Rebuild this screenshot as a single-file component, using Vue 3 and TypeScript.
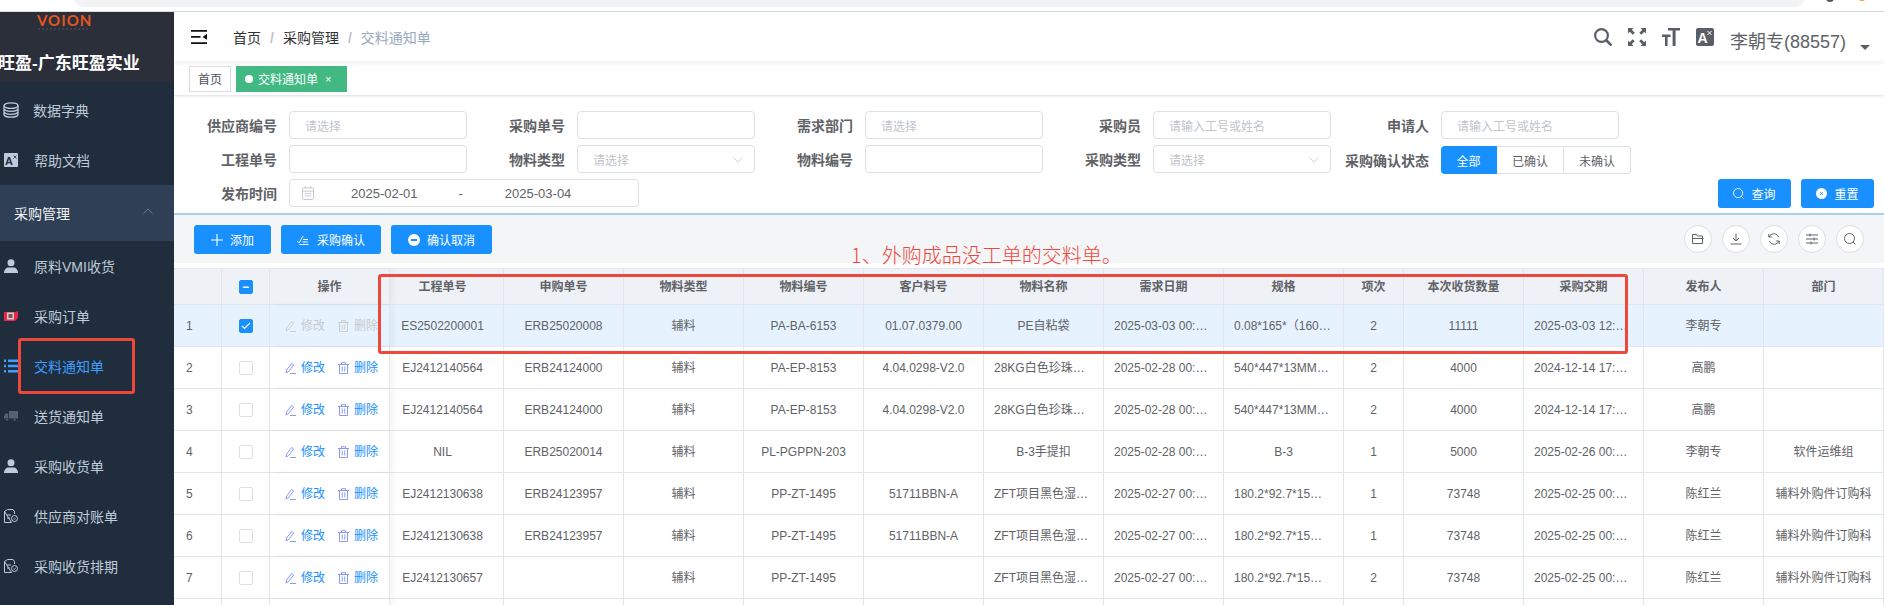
<script setup lang="ts">
interface NavItem {
  label: string
  icon: string
  active?: boolean
  group?: boolean
  indent?: boolean
}

interface Row {
  no: number
  gc: string
  sg: string
  wl: string
  kh: string
  mc: string
  rq: string
  gg: string
  xc: number
  sl: number
  jq: string
  fb: string
  bm: string
}

const navItems: NavItem[] = [
  { label: '数据字典', icon: 'db' },
  { label: '帮助文档', icon: 'lang', indent: true },
  { label: '采购管理', icon: '', group: true },
  { label: '原料VMI收货', icon: 'user', indent: true },
  { label: '采购订单', icon: 'ticket', indent: true },
  { label: '交料通知单', icon: 'list', indent: true, active: true },
  { label: '送货通知单', icon: 'truck', indent: true },
  { label: '采购收货单', icon: 'user', indent: true },
  { label: '供应商对账单', icon: 'doc', indent: true },
  { label: '采购收货排期', icon: 'doc', indent: true },
]

const headers = ['工程单号', '申购单号', '物料类型', '物料编号', '客户料号', '物料名称', '需求日期', '规格', '项次', '本次收货数量', '采购交期', '发布人', '部门']

const rows: Row[] = [
  { no: 1, gc: 'ES2502200001', sg: 'ERB25020008', wl: 'PA-BA-6153', kh: '01.07.0379.00', mc: 'PE自粘袋', rq: '2025-03-03 00:00:00', gg: '0.08*165*（160+50）', xc: 2, sl: 11111, jq: '2025-03-03 12:00:00', fb: '李朝专', bm: '' },
  { no: 2, gc: 'EJ2412140564', sg: 'ERB24124000', wl: 'PA-EP-8153', kh: '4.04.0298-V2.0', mc: '28KG白色珍珠棉袋', rq: '2025-02-28 00:00:00', gg: '540*447*13MM白色', xc: 2, sl: 4000, jq: '2024-12-14 17:00:00', fb: '高鹏', bm: '' },
  { no: 3, gc: 'EJ2412140564', sg: 'ERB24124000', wl: 'PA-EP-8153', kh: '4.04.0298-V2.0', mc: '28KG白色珍珠棉袋', rq: '2025-02-28 00:00:00', gg: '540*447*13MM白色', xc: 2, sl: 4000, jq: '2024-12-14 17:00:00', fb: '高鹏', bm: '' },
  { no: 4, gc: 'NIL', sg: 'ERB25020014', wl: 'PL-PGPPN-203', kh: '', mc: 'B-3手提扣', rq: '2025-02-28 00:00:00', gg: 'B-3', xc: 1, sl: 5000, jq: '2025-02-26 00:00:00', fb: '李朝专', bm: '软件运维组' },
  { no: 5, gc: 'EJ2412130638', sg: 'ERB24123957', wl: 'PP-ZT-1495', kh: '51711BBN-A', mc: 'ZFT项目黑色湿巾盖', rq: '2025-02-27 00:00:00', gg: '180.2*92.7*15毫米黑色', xc: 1, sl: 73748, jq: '2025-02-25 00:00:00', fb: '陈红兰', bm: '辅料外购件订购科' },
  { no: 6, gc: 'EJ2412130638', sg: 'ERB24123957', wl: 'PP-ZT-1495', kh: '51711BBN-A', mc: 'ZFT项目黑色湿巾盖', rq: '2025-02-27 00:00:00', gg: '180.2*92.7*15毫米黑色', xc: 1, sl: 73748, jq: '2025-02-25 00:00:00', fb: '陈红兰', bm: '辅料外购件订购科' },
  { no: 7, gc: 'EJ2412130657', sg: '', wl: 'PP-ZT-1495', kh: '', mc: 'ZFT项目黑色湿巾盖', rq: '2025-02-27 00:00:00', gg: '180.2*92.7*15毫米黑色', xc: 2, sl: 73748, jq: '2025-02-25 00:00:00', fb: '陈红兰', bm: '辅料外购件订购科' },
]

function cells(r: Row): (string | number)[] {
  return [r.gc, r.sg, '辅料', r.wl, r.kh, r.mc, r.rq, r.gg, r.xc, r.sl, r.jq, r.fb, r.bm]
}
</script>

<template>
  <div class="page">
    <div class="browser">
      <div class="addr"></div>
      <span class="b-dot dark"></span>
      <span class="b-dot orange"></span>
    </div>

    <div class="shell">
      <aside class="side">
        <div class="brand">
          <div class="logo">VOION</div>
          <div class="logo-sub"></div>
          <div class="brand-name">旺盈-广东旺盈实业</div>
        </div>
        <nav class="nav">
          <div
            v-for="item in navItems"
            :key="item.label"
            class="nav-item"
            :class="{ active: item.active, group: item.group, indent: item.indent }"
          >
            <svg v-if="item.icon === 'db'" class="nav-ic" viewBox="0 0 16 16" fill="none" stroke="#bfcbd9" stroke-width="1.3">
              <ellipse cx="8" cy="3.6" rx="7" ry="2.8" />
              <path d="M1 3.6v8.8c0 1.5 3.100 2.800 7 2.800s7-1.300 7-2.800V3.600M1 6.600c0 1.500 3.100 2.800 7 2.800s7-1.300 7-2.800M1 9.600c0 1.500 3.100 2.800 7 2.800s7-1.300 7-2.800" />
            </svg>
            <svg v-else-if="item.icon === 'lang'" class="nav-ic" viewBox="0 0 14 14">
              <rect width="14" height="14" rx="1" fill="#bfcbd9" />
              <text x="1" y="12" class="ic-a" fill="#1f2d3d">A</text>
              <path d="M9.500 2.500l3 3M12.500 2.500l-3 3" stroke="#1f2d3d" stroke-width=".8" />
            </svg>
            <svg v-else-if="item.icon === 'user'" class="nav-ic" viewBox="0 0 14 14" fill="#bfcbd9">
              <circle cx="7" cy="3.800" r="3.500" />
              <path d="M0 14c0-3.600 2.500-5.500 4.500-5.500h5c2 0 4.500 1.900 4.500 5.500z" />
            </svg>
            <svg v-else-if="item.icon === 'ticket'" class="nav-ic" viewBox="0 0 14 10">
              <path d="M0 1h11l3-1v7l-3 3H0z" fill="#e8264f" />
              <rect x="3" y="1.500" width="7" height="7" fill="#d9d0c8" />
              <rect x="4.500" y="3" width="4" height="4" fill="#6d5a5a" />
            </svg>
            <svg v-else-if="item.icon === 'list'" class="nav-ic" viewBox="0 0 14 14" fill="#409eff">
              <path d="M0 .5h2v2.500H0zM4 .5h10v2.500H4zM0 5.700h2v2.500H0zM4 5.700h10v2.500H4zM0 11h2v2.500H0zM4 11h10v2.500H4z" />
            </svg>
            <svg v-else-if="item.icon === 'truck'" class="nav-ic" viewBox="0 0 14 10" fill="#56636f">
              <path d="M5 0h9v7.500H5zM4.200 2.500v5H0V5.500L1.500 2.500z" />
              <circle cx="3" cy="8.500" r="1.400" stroke="#1f2d3d" stroke-width=".5" />
              <circle cx="10.500" cy="8.500" r="1.400" stroke="#1f2d3d" stroke-width=".5" />
            </svg>
            <svg v-else-if="item.icon === 'doc'" class="nav-ic" viewBox="0 0 14 14" fill="none" stroke="#bfcbd9" stroke-width="1">
              <path d="M3.500.5H9l1.500 2v2.500M7.500 13.500H.5v-11zM.5 2.500l3-2M3 6h4M3 9h3" />
              <circle cx="10.500" cy="9.500" r="3" />
              <path d="M9.300 9.500l1 1 1.500-1.800" stroke-width=".8" />
            </svg>
            <span>{{ item.label }}</span>
            <svg v-if="item.group" class="nav-arrow" viewBox="0 0 10 6" fill="none" stroke="#6b7888" stroke-width="1">
              <path d="M.5 5.500L5 1l4.500 4.500" />
            </svg>
          </div>
        </nav>
      </aside>

      <main class="main">
        <header class="topbar">
          <svg class="burger" viewBox="0 0 16 14">
            <path d="M0 0h16v1.800H0zM0 6h9.500v1.800H0zM0 12.200h16V14H0zM16 3.800v6L11.500 6.900z" fill="#111" />
          </svg>
          <div class="crumbs">
            <span class="c-main">首页</span><i>/</i><span class="c-main">采购管理</span><i>/</i><span class="c-last">交料通知单</span>
          </div>
          <div class="top-right">
            <svg class="top-ic" viewBox="0 0 18 18" fill="none" stroke="#5a5e66" stroke-width="2.200">
              <circle cx="7.500" cy="7.500" r="6.400" />
              <path d="M12 12l5.500 5.500" stroke-width="2.600" />
            </svg>
            <svg class="top-ic" viewBox="0 0 18 18" fill="#5a5e66">
              <path d="M0 0h5.500L3.800 1.700l3 3-2 2-3-3L0 5.500zM18 0v5.500l-1.700-1.700-3 3-2-2 3-3L12.500 0zM0 18v-5.500l1.700 1.700 3-3 2 2-3 3L5.500 18zM18 18h-5.500l1.700-1.700-3-3 2-2 3 3 1.800-1.800z" />
            </svg>
            <svg class="top-ic" viewBox="0 0 18 18" fill="#5a5e66">
              <path d="M6 0h12v2.600h-4.400V18h-3V2.600H6zM0 6.500h8.500v2.400H5.600V18H3V8.900H0z" />
            </svg>
            <svg class="top-ic" viewBox="0 0 18 18">
              <rect width="18" height="18" rx="2" fill="#5a5e66" />
              <text x="1.500" y="15" class="ic-b" fill="#fff">A</text>
              <path d="M11.500 3l4 4M15.500 3l-4 4" stroke="#fff" stroke-width="1" />
            </svg>
            <span class="user">李朝专(88557)</span>
            <span class="caret"></span>
          </div>
        </header>

        <div class="tags">
          <span class="tag">首页</span>
          <span class="tag on"><b class="dot"></b>交料通知单<em>×</em></span>
        </div>

        <section class="filter">
          <div class="f-grid">
            <label class="f-item"><span>供应商编号</span><div class="inp ph">请选择</div></label>
            <label class="f-item"><span>采购单号</span><div class="inp"></div></label>
            <label class="f-item"><span>需求部门</span><div class="inp ph">请选择</div></label>
            <label class="f-item"><span>采购员</span><div class="inp ph">请输入工号或姓名</div></label>
            <label class="f-item"><span>申请人</span><div class="inp ph">请输入工号或姓名</div></label>

            <label class="f-item"><span>工程单号</span><div class="inp"></div></label>
            <label class="f-item"><span>物料类型</span><div class="inp ph sel">请选择<svg viewBox="0 0 12 7" fill="none" stroke="#c0c4cc"><path d="M.5.5L6 6 11.500.5" /></svg></div></label>
            <label class="f-item"><span>物料编号</span><div class="inp"></div></label>
            <label class="f-item"><span>采购类型</span><div class="inp ph sel">请选择<svg viewBox="0 0 12 7" fill="none" stroke="#c0c4cc"><path d="M.5.5L6 6 11.500.5" /></svg></div></label>
            <div class="f-item">
              <span>采购确认状态</span>
              <div class="radios">
                <div class="radio on">全部</div>
                <div class="radio">已确认</div>
                <div class="radio">未确认</div>
              </div>
            </div>

            <div class="f-item wide">
              <span>发布时间</span>
              <div class="inp date">
                <svg viewBox="0 0 13 15" fill="none" stroke="#c0c4cc">
                  <rect x=".5" y="2" width="12" height="12.500" rx="1" />
                  <path d="M.5 5.500h12M3.500 0v2M9.500 0v2M3 8h7M3 10.500h7" />
                </svg>
                <span class="d1">2025-02-01</span>
                <span class="dash">-</span>
                <span class="d2">2025-03-04</span>
              </div>
            </div>
          </div>
          <div class="f-actions">
            <button type="button" class="btn q">
              <svg viewBox="0 0 12 12" fill="none" stroke="#fff"><circle cx="5.500" cy="5.500" r="5" /><path d="M9 9l2.500 2.500" /></svg>查询
            </button>
            <button type="button" class="btn q">
              <svg viewBox="0 0 12 12"><circle cx="6" cy="6" r="6" fill="#fff" /><path d="M4.500 4.500l3 3M7.500 4.500l-3 3" stroke="#1890ff" /></svg>重置
            </button>
          </div>
        </section>

        <div class="toolbar">
          <button type="button" class="btn add">
            <svg viewBox="0 0 12 12" stroke="#fff" stroke-width="1.100"><path d="M6 0v12M0 6h12" /></svg>添加
          </button>
          <button type="button" class="btn conf">
            <svg viewBox="0 0 12 10" fill="none" stroke="#fff"><path d="M0 6l2 2 4-7M6 4.500h5M5.500 7h5.500M2.500 9.500h9" /></svg>采购确认
          </button>
          <button type="button" class="btn cancel">
            <svg viewBox="0 0 12 12"><circle cx="6" cy="6" r="6" fill="#fff" /><rect x="3" y="5" width="6" height="2" fill="#1890ff" /></svg>确认取消
          </button>
          <div class="tools">
            <span class="tool"><svg viewBox="0 0 12 12" fill="none" stroke="#606266"><path d="M.5 10.500v-9h4l1 1.500h5v7.500zM.5 5.500h11" /></svg></span>
            <span class="tool"><svg viewBox="0 0 12 12" fill="none" stroke="#606266"><path d="M6 .5v7M3 5l3 3 3-3M.5 11h11" /></svg></span>
            <span class="tool"><svg viewBox="0 0 12 12" fill="none" stroke="#606266"><path d="M10.500 4A5 5 0 0 0 2 2.500L.8 4M1.500 8A5 5 0 0 0 10 9.500L11.200 8M.8 1v3h3M11.200 11V8h-3" /></svg></span>
            <span class="tool"><svg viewBox="0 0 12 12" fill="none" stroke="#606266"><path d="M0 2h12M0 6h12M0 10h12M4 .5v3M8 4.500v3M5 8.500v3" /></svg></span>
            <span class="tool"><svg viewBox="0 0 12 12" fill="none" stroke="#606266"><circle cx="5.500" cy="5.500" r="5" /><path d="M9 9l2.500 2.500" /></svg></span>
          </div>
        </div>

        <div class="table">
          <div class="tr head">
            <div class="td"></div>
            <div class="td center"><span class="cb on">−</span></div>
            <div class="td center ops-col">操作</div>
            <div v-for="(h, i) in headers" :key="h" class="td center" :class="{ first: i === 0 }">{{ h }}</div>
          </div>
          <div v-for="r in rows" :key="r.no" class="tr" :class="{ picked: r.no === 1 }">
            <div class="td idx">{{ r.no }}</div>
            <div class="td center">
              <span class="cb" :class="{ on: r.no === 1 }">
                <svg v-if="r.no === 1" viewBox="0 0 10 8" fill="none" stroke="#fff" stroke-width="1.200"><path d="M1 4l2.500 2.500L9 1" /></svg>
              </span>
            </div>
            <div class="td ops ops-col">
              <span class="op">
                <svg viewBox="0 0 11 12" fill="none" stroke="currentColor" stroke-width=".9"><path d="M1 11l.6-3 5-6.500 2 1.500-5 6.500zM5 11.500h6" /></svg>修改
              </span>
              <span class="op">
                <svg viewBox="0 0 11 12" fill="none" stroke="currentColor" stroke-width=".9"><path d="M0 2.500h11M3.500 2.500V.7h4v1.800M1.500 2.500v9h8v-9M4.200 4.500v5M6.800 4.500v5" /></svg>删除
              </span>
            </div>
            <div v-for="(c, i) in cells(r)" :key="i" class="td center text" :class="{ first: i === 0 }">{{ c }}</div>
          </div>
          <div class="tr">
            <div class="td"></div>
            <div class="td"></div>
            <div class="td ops-col"></div>
            <div v-for="h in headers" :key="h" class="td"></div>
          </div>
        </div>
      </main>
    </div>

    <div class="note">1、外购成品没工单的交料单。</div>
    <div class="mark mark-row"></div>
    <div class="mark mark-nav"></div>
  </div>
</template>

<style scoped>
.page {
  position: relative;
  width: 1884px;
  height: 605px;
  overflow: hidden;
  background: #fff;
  font-family: "Liberation Sans", "Noto Sans CJK SC", sans-serif;
  color: #606266;
}

.browser {
  position: relative;
  height: 12px;
  box-sizing: border-box;
  border-bottom: 1px solid #dadce0;
  overflow: hidden;
}

.addr {
  position: absolute;
  left: 73px;
  top: -20px;
  width: 1733px;
  height: 27px;
  background: #f1f3f4;
  border-radius: 12px;
}

.b-dot {
  position: absolute;
  top: -6px;
  width: 8px;
  height: 8px;
  border-radius: 50%;
}

.b-dot.dark {
  left: 1826px;
  background: #555;
}

.b-dot.orange {
  left: 1858px;
  top: -7px;
  background: #f0a030;
}

.shell {
  display: flex;
  height: 593px;
}

.side {
  flex: none;
  width: 174px;
  background: #1f2d3d;
  overflow: hidden;
}

.brand {
  height: 70px;
  background: #2b2f3a;
  overflow: hidden;
}

.logo {
  margin: 1px 0 0 37px;
  font-family: Lato, sans-serif;
  font-weight: 700;
  font-size: 15px;
  line-height: 15px;
  letter-spacing: 1px;
  color: #e4561f;
}

.logo-sub {
  width: 50px;
  height: 2px;
  margin: 0 0 0 38px;
  border-top: 2px dotted #3f424b;
}

.brand-name {
  margin: 22px 0 0 -2px;
  font-size: 17px;
  line-height: 20px;
  font-weight: 700;
  color: #fff;
  white-space: nowrap;
}

.nav {
  padding-top: 3px;
}

.nav-item {
  display: flex;
  align-items: center;
  height: 50px;
  padding-left: 4px;
  font-size: 14px;
  color: #bfcbd9;
  position: relative;
}

.nav-item span {
  margin-left: 14px;
}

.nav-item.indent span {
  margin-left: 16px;
}

.nav-item.active span {
  color: #409eff;
}

.nav-item.group {
  height: 56px;
  background: #2f3f55;
  color: #f4f4f5;
  padding-left: 0;
}

.nav-ic {
  flex: none;
  width: 14px;
  height: 14px;
}

.nav-item:first-child .nav-ic {
  width: 16px;
  height: 16px;
  margin-left: -1px;
}

.nav-arrow {
  position: absolute;
  left: 143px;
  top: 23px;
  width: 10px;
  height: 6px;
}

.ic-a {
  font: 700 11px "Liberation Sans", sans-serif;
}

.ic-b {
  font: 700 14px "Liberation Sans", sans-serif;
}

.main {
  flex: 1;
  min-width: 0;
  display: flex;
  flex-direction: column;
}

.topbar {
  position: relative;
  z-index: 2;
  display: flex;
  align-items: center;
  height: 50px;
  flex: none;
  padding-left: 17px;
  box-shadow: 0 1px 4px rgba(0, 21, 41, 0.08);
}

.burger {
  width: 16px;
  height: 14px;
  margin-top: -1px;
}

.crumbs {
  margin-left: 26px;
  font-size: 14px;
  margin-top: -1px;
}

.crumbs i {
  font-style: normal;
  font-weight: 700;
  margin: 0 9px;
  color: #c0c4cc;
}

.c-main {
  color: #303133;
}

.c-last {
  color: #97a8be;
}

.top-right {
  position: absolute;
  left: 1420px;
  top: 16px;
  display: flex;
  align-items: flex-start;
  gap: 16px;
}

.top-ic {
  width: 18px;
  height: 18px;
  flex: none;
}

.user {
  margin: 2px 0 0 0;
  font-size: 18px;
  line-height: 24px;
  white-space: nowrap;
  color: #606266;
}

.caret {
  width: 0;
  height: 0;
  margin: 17px 0 0 -2px;
  border: 5px solid transparent;
  border-top-color: #5a5e66;
  border-bottom: 0;
}

.tags {
  position: relative;
  z-index: 1;
  display: flex;
  align-items: center;
  gap: 5px;
  height: 33px;
  flex: none;
  padding: 0 0 0 15px;
  box-sizing: border-box;
  box-shadow: 0 1px 3px rgba(0, 0, 0, 0.12), 0 0 3px rgba(0, 0, 0, 0.04);
}

.tag {
  display: flex;
  align-items: center;
  justify-content: center;
  height: 26px;
  width: 42px;
  box-sizing: border-box;
  border: 1px solid #d8dce5;
  font-size: 12px;
  color: #495060;
}

.tag.on {
  width: 111px;
  justify-content: flex-start;
  padding-left: 8px;
  background: #42b983;
  border-color: #42b983;
  color: #fff;
}

.dot {
  width: 8px;
  height: 8px;
  margin-right: 5px;
  border-radius: 50%;
  background: #fff;
}

.tag em {
  margin-left: 7px;
  font-style: normal;
  font-size: 11px;
}

.filter {
  position: relative;
  flex: none;
  height: 120px;
  box-sizing: border-box;
  padding: 16px 0 0 3px;
  border-bottom: 2px solid #a8d0f0;
}

.f-grid {
  display: grid;
  grid-template-columns: repeat(5, 288px);
  grid-auto-rows: 28px;
  row-gap: 6px;
}

.f-item {
  display: grid;
  grid-template-columns: 100px 178px;
  column-gap: 12px;
  align-items: center;
}

.f-item > span {
  text-align: right;
  font-size: 14px;
  font-weight: 700;
  color: #606266;
  white-space: nowrap;
}

.f-item.wide {
  grid-column: span 2;
  grid-template-columns: 100px 350px;
}

.inp {
  position: relative;
  display: flex;
  align-items: center;
  height: 28px;
  box-sizing: border-box;
  padding-left: 15px;
  border: 1px solid #dcdfe6;
  border-radius: 4px;
  font-size: 12px;
}

.ph {
  color: #c0c4cc;
}

.sel svg {
  position: absolute;
  right: 11px;
  top: 11px;
  width: 10px;
  height: 6px;
}

.date {
  padding: 0;
  font-size: 13px;
  color: #606266;
}

.date svg {
  flex: none;
  width: 12px;
  height: 14px;
  margin-left: 12px;
}

.d1 {
  margin-left: 37px;
}

.dash {
  margin-left: 41px;
}

.d2 {
  margin-left: 42px;
}

.radios {
  display: flex;
  height: 28px;
  margin-top: 1px;
  font-size: 12px;
}

.radio {
  flex: none;
  width: 67px;
  display: flex;
  align-items: center;
  justify-content: center;
  box-sizing: border-box;
  border: 1px solid #dcdfe6;
  border-left: 0;
}

.radio.on {
  width: 56px;
  background: #1890ff;
  border-color: #1890ff;
  color: #fff;
  border-radius: 4px 0 0 4px;
}

.radio:last-child {
  border-radius: 0 4px 4px 0;
}

.f-actions {
  position: absolute;
  left: 1544px;
  top: 84px;
  display: flex;
  gap: 10px;
}

.btn {
  display: flex;
  align-items: center;
  justify-content: center;
  height: 29px;
  padding: 0;
  border: 0;
  border-radius: 3px;
  background: #1890ff;
  color: #fff;
  font: 12px "Liberation Sans", "Noto Sans CJK SC", sans-serif;
}

.btn svg {
  flex: none;
  width: 12px;
  height: 12px;
  margin-right: 7px;
}

.btn.q {
  width: 73px;
}

.btn.q svg {
  width: 11px;
  height: 11px;
}

.toolbar {
  position: relative;
  flex: none;
  display: flex;
  align-items: flex-start;
  gap: 10px;
  height: 48px;
  box-sizing: border-box;
  padding: 10px 0 0 20px;
  background: #f3f5f6;
}

.btn.add {
  width: 77px;
}

.btn.conf {
  width: 100px;
}

.btn.conf svg {
  height: 10px;
  margin-right: 8px;
}

.btn.cancel {
  width: 101px;
}

.tools {
  position: absolute;
  left: 1510px;
  top: 10px;
  display: flex;
  gap: 10px;
}

.tool {
  display: flex;
  align-items: center;
  justify-content: center;
  width: 28px;
  height: 28px;
  box-sizing: border-box;
  border: 1px solid #dcdfe6;
  border-radius: 50%;
  background: #fff;
}

.tool svg {
  width: 12px;
  height: 12px;
}

.table {
  margin-top: 5px;
  border-top: 1px solid #e4e8ee;
  font-size: 12px;
}

.tr {
  display: grid;
  grid-template-columns: 48px 48px 120px 114px repeat(7, 120px) 60px repeat(3, 120px) 1fr;
  height: 42px;
  box-sizing: border-box;
  border-bottom: 1px solid #e2e6ec;
}

.tr.head {
  height: 36px;
  background: #eef1f6;
  font-weight: 700;
}

.tr.picked {
  background: #e6f3ff;
}

.td {
  min-width: 0;
  box-sizing: border-box;
  border-right: 1px solid #e2e6ec;
  display: flex;
  align-items: center;
  line-height: 16px;
}

.td.center {
  justify-content: center;
}

.td.text {
  display: block;
  padding: 0 10px;
  line-height: 42px;
  text-align: center;
  white-space: nowrap;
  overflow: hidden;
  text-overflow: ellipsis;
}

.td.first {
  padding-right: 8px;
  padding-left: 0;
}

.idx {
  padding-left: 12px;
}

.ops-col {
  position: relative;
  box-shadow: 4px 0 5px rgba(0, 0, 0, 0.04);
}

.ops {
  padding-left: 15px;
  gap: 13px;
  color: #1890ff;
}

.picked .ops {
  color: #c8c9cc;
}

.op {
  display: flex;
  align-items: center;
  margin-top: 1px;
}

.op svg {
  width: 11px;
  height: 12px;
  margin-right: 5px;
  color: #7f8cf5;
}

.picked .op svg {
  color: #c8c9cc;
}

.cb {
  display: flex;
  align-items: center;
  justify-content: center;
  width: 14px;
  height: 14px;
  box-sizing: border-box;
  border: 1px solid #dcdfe6;
  border-radius: 2px;
  background: #fff;
}

.cb.on {
  background: #1890ff;
  border-color: #1890ff;
  color: #fff;
  font-size: 12px;
  line-height: 12px;
}

.cb svg {
  width: 10px;
  height: 8px;
}

.note {
  position: absolute;
  left: 851px;
  top: 242px;
  font-family: "Noto Sans CJK SC", sans-serif;
  font-weight: 300;
  font-size: 20px;
  line-height: 26px;
  white-space: nowrap;
  color: #f0473c;
}

.mark {
  position: absolute;
  box-sizing: border-box;
  border: 3px solid #f0473c;
  border-radius: 3px;
}

.mark-row {
  left: 378px;
  top: 274px;
  width: 1250px;
  height: 80px;
}

.mark-nav {
  left: 18px;
  top: 338px;
  width: 117px;
  height: 56px;
}
</style>

<style>
html,
body {
  margin: 0;
  overflow: hidden;
}
</style>
